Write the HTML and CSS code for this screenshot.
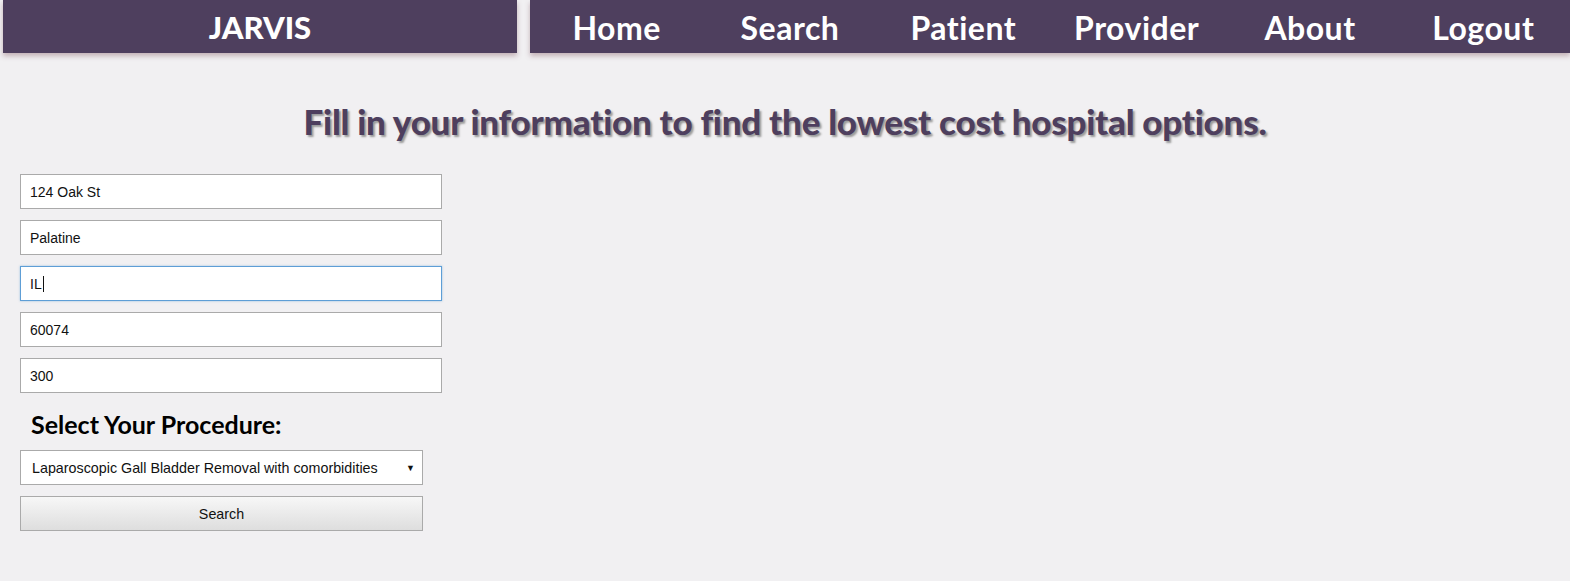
FILE: index.html
```html
<!DOCTYPE html>
<html>
<head>
<meta charset="utf-8">
<title>JARVIS</title>
<link rel="stylesheet" href="styles.css">
</head>
<body>
<header class="topbar">
  <div class="brand">JARVIS</div>
  <nav class="nav">
    <a class="nav-item" href="#">Home</a>
    <a class="nav-item" href="#">Search</a>
    <a class="nav-item" href="#">Patient</a>
    <a class="nav-item" href="#">Provider</a>
    <a class="nav-item" href="#">About</a>
    <a class="nav-item" href="#">Logout</a>
  </nav>
</header>
<h1 class="headline">Fill in your information to find the lowest cost hospital options.</h1>
<form class="form">
  <input class="field" type="text" value="124 Oak St">
  <input class="field" type="text" value="Palatine">
  <div class="field field-focus">IL<span class="caret"></span></div>
  <input class="field" type="text" value="60074">
  <input class="field" type="text" value="300">
  <h2 class="label">Select Your Procedure:</h2>
  <div class="select"><span>Laparoscopic Gall Bladder Removal with comorbidities</span><span class="arrow">▼</span></div>
  <button class="btn" type="button">Search</button>
</form>
</body>
</html>
```
FILE: styles.css
```css
body {
  margin: 0;
  background: #f1f0f2;
  font-family: "Liberation Sans", Arial, sans-serif;
}
.topbar {
  display: flex;
  gap: 13px;
  padding-left: 3px;
  height: 53px;
}
.brand, .nav {
  background: #4e3f5e;
  box-shadow: 0 3px 5px rgba(140, 100, 110, 0.45);
  height: 53px;
}
.brand {
  width: 514px;
  color: #fff;
  font-family: "Lato", sans-serif;
  font-weight: 900;
  font-size: 31px;
  line-height: 54px;
  text-align: center;
}
.nav {
  flex: 1;
  display: flex;
}
.nav-item {
  flex: 1;
  color: #fff;
  text-decoration: none;
  font-family: "Lato", sans-serif;
  font-weight: 700;
  font-size: 32px;
  line-height: 55px;
  text-align: center;
  letter-spacing: 0.5px;
}
.headline {
  margin: 46px 0 0;
  text-align: center;
  font-family: "Lato", sans-serif;
  font-weight: 900;
  font-size: 35px;
  line-height: 44px;
  color: #4e3f5e;
  letter-spacing: -0.25px;
  text-shadow: 2px 2px 2px #9a9a9a;
}
.form {
  display: flex;
  flex-direction: column;
  align-items: flex-start;
  padding: 31px 0 0 20px;
}
.field {
  box-sizing: border-box;
  width: 422px;
  height: 35px;
  margin: 0 0 11px;
  padding: 0 9px;
  border: 1px solid #aaa;
  background: #fff;
  font-family: "Liberation Sans", Arial, sans-serif;
  font-size: 14px;
  color: #111;
  outline: none;
  display: flex;
  align-items: center;
}
.field-focus {
  border: 1px solid #5e9ed6;
  box-shadow: 0 0 2px rgba(94, 158, 214, 0.6);
}
.caret {
  display: inline-block;
  width: 1px;
  height: 16px;
  background: #111;
  margin-left: 1px;
}
.label {
  margin: 5px 0 10px 11px;
  font-family: "Lato", sans-serif;
  font-weight: 700;
  font-size: 25px;
  line-height: 31px;
  color: #000;
}
.select {
  box-sizing: border-box;
  width: 403px;
  height: 35px;
  border: 1px solid #aaa;
  background: #fff;
  display: flex;
  align-items: center;
  justify-content: space-between;
  padding: 0 7px 0 11px;
  font-size: 14.3px;
  color: #111;
  margin-bottom: 11px;
}
.arrow {
  font-size: 9px;
}
.btn {
  box-sizing: border-box;
  width: 403px;
  height: 35px;
  border: 1px solid #aaa;
  background: linear-gradient(#f7f7f7, #dedede);
  font-family: "Liberation Sans", Arial, sans-serif;
  font-size: 14.3px;
  color: #111;
  padding: 0;
}
```
